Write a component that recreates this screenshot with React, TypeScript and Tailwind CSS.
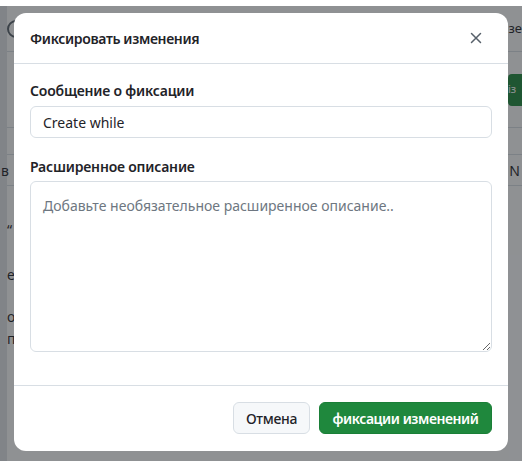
import { useState } from 'react';

function CloseIcon() {
  return (
    <svg width="16" height="16" viewBox="0 0 16 16" fill="none" stroke="currentColor" strokeWidth="1.5" strokeLinecap="round">
      <path d="M3.5 3.5l9 9M12.5 3.5l-9 9" />
    </svg>
  );
}

// страница под затемнением: видны только края
function BackgroundPage() {
  return (
    <div className="flex h-full pt-[6px]">
      <div className="w-[7px] shrink-0 bg-[#e3e5e8]" />
      <div className="flex flex-1 flex-col">
        <div className="flex h-[46px] items-center justify-between border-b border-[#d8dee4]">
          <div className="h-[18px] w-[18px] rounded-full border-2 border-[#57606a]" />
          <span className="text-[13px] text-[#1f2328]">зе</span>
        </div>
        <div className="flex h-[76px] items-center justify-end border-b border-[#d8dee4]">
          <div className="flex h-[32px] w-[14px] items-center rounded-l-sm bg-[#1f883d] text-[11px] text-white">із</div>
        </div>
        <div className="h-[27px] border-b border-[#d8dee4]" />
        <div className="flex h-[31px] items-center justify-between border-b border-[#d8dee4] text-[14px] text-[#1f2328]">
          <span className="-ml-[6px]">в</span>
          <span className="pr-[2px]">N</span>
        </div>
        <div className="flex flex-col pt-[34px] text-[14px] leading-5 text-[#1f2328]">
          <span>“</span>
          <span className="mt-[25px]">е</span>
          <span className="mt-[22px]">о</span>
          <span className="mt-[2px]">п</span>
        </div>
      </div>
    </div>
  );
}

export default function App() {
  const [message, setMessage] = useState('Create while');
  const [description, setDescription] = useState('');

  return (
    <div className="relative h-[461px] w-[522px] overflow-hidden bg-white font-['Noto_Sans',sans-serif]">
      <BackgroundPage />
      <div className="absolute inset-x-0 top-[6px] bottom-0 bg-[#1f2328]/50 pl-[14px] pt-[7px]">
        <div className="w-[494px] overflow-hidden rounded-xl bg-white">
          <div className="flex h-[51px] items-center justify-between border-b border-[#d8dee4] pl-4 pr-[16px]">
            <h2 className="text-[14px] font-semibold tracking-[-0.35px] text-[#1f2328]">Фиксировать изменения</h2>
            <button className="flex h-8 w-8 items-center justify-center rounded-md text-[#57606a]">
              <CloseIcon />
            </button>
          </div>

          <div className="px-4 pt-[17px] pb-[33px]">
            <label className="mb-[5px] block text-[14px] font-semibold leading-5 tracking-[-0.2px] text-[#1f2328]">
              Сообщение о фиксации
            </label>
            <input
              value={message}
              onChange={(e) => setMessage(e.target.value)}
              className="block h-8 w-full rounded-md border border-[#d8dee4] px-3 text-[14px] text-[#1f2328] outline-none"
            />

            <label className="mt-[19px] mb-[4px] block text-[14px] font-semibold leading-5 tracking-[-0.2px] text-[#1f2328]">
              Расширенное описание
            </label>
            <textarea
              value={description}
              onChange={(e) => setDescription(e.target.value)}
              placeholder="Добавьте необязательное расширенное описание.."
              className="block h-[171px] w-full rounded-md border border-[#d8dee4] px-3 py-[14px] text-[14px] leading-5 text-[#1f2328] outline-none placeholder:text-[#6e7781]"
            />
          </div>

          <div className="flex justify-end gap-[9px] border-t border-[#d8dee4] px-4 pt-[16px] pb-[17px]">
            <button className="h-8 w-[77px] rounded-md border border-[#d8dee4] bg-[#f6f8fa] text-[14px] font-medium tracking-[-0.3px] text-[#1f2328]">
              Отмена
            </button>
            <button className="h-8 w-[173px] rounded-md border border-[#1a7f37] bg-[#1f883d] text-[14px] font-semibold tracking-[-0.45px] text-white">
              фиксации изменений
            </button>
          </div>
        </div>
      </div>
    </div>
  );
}
